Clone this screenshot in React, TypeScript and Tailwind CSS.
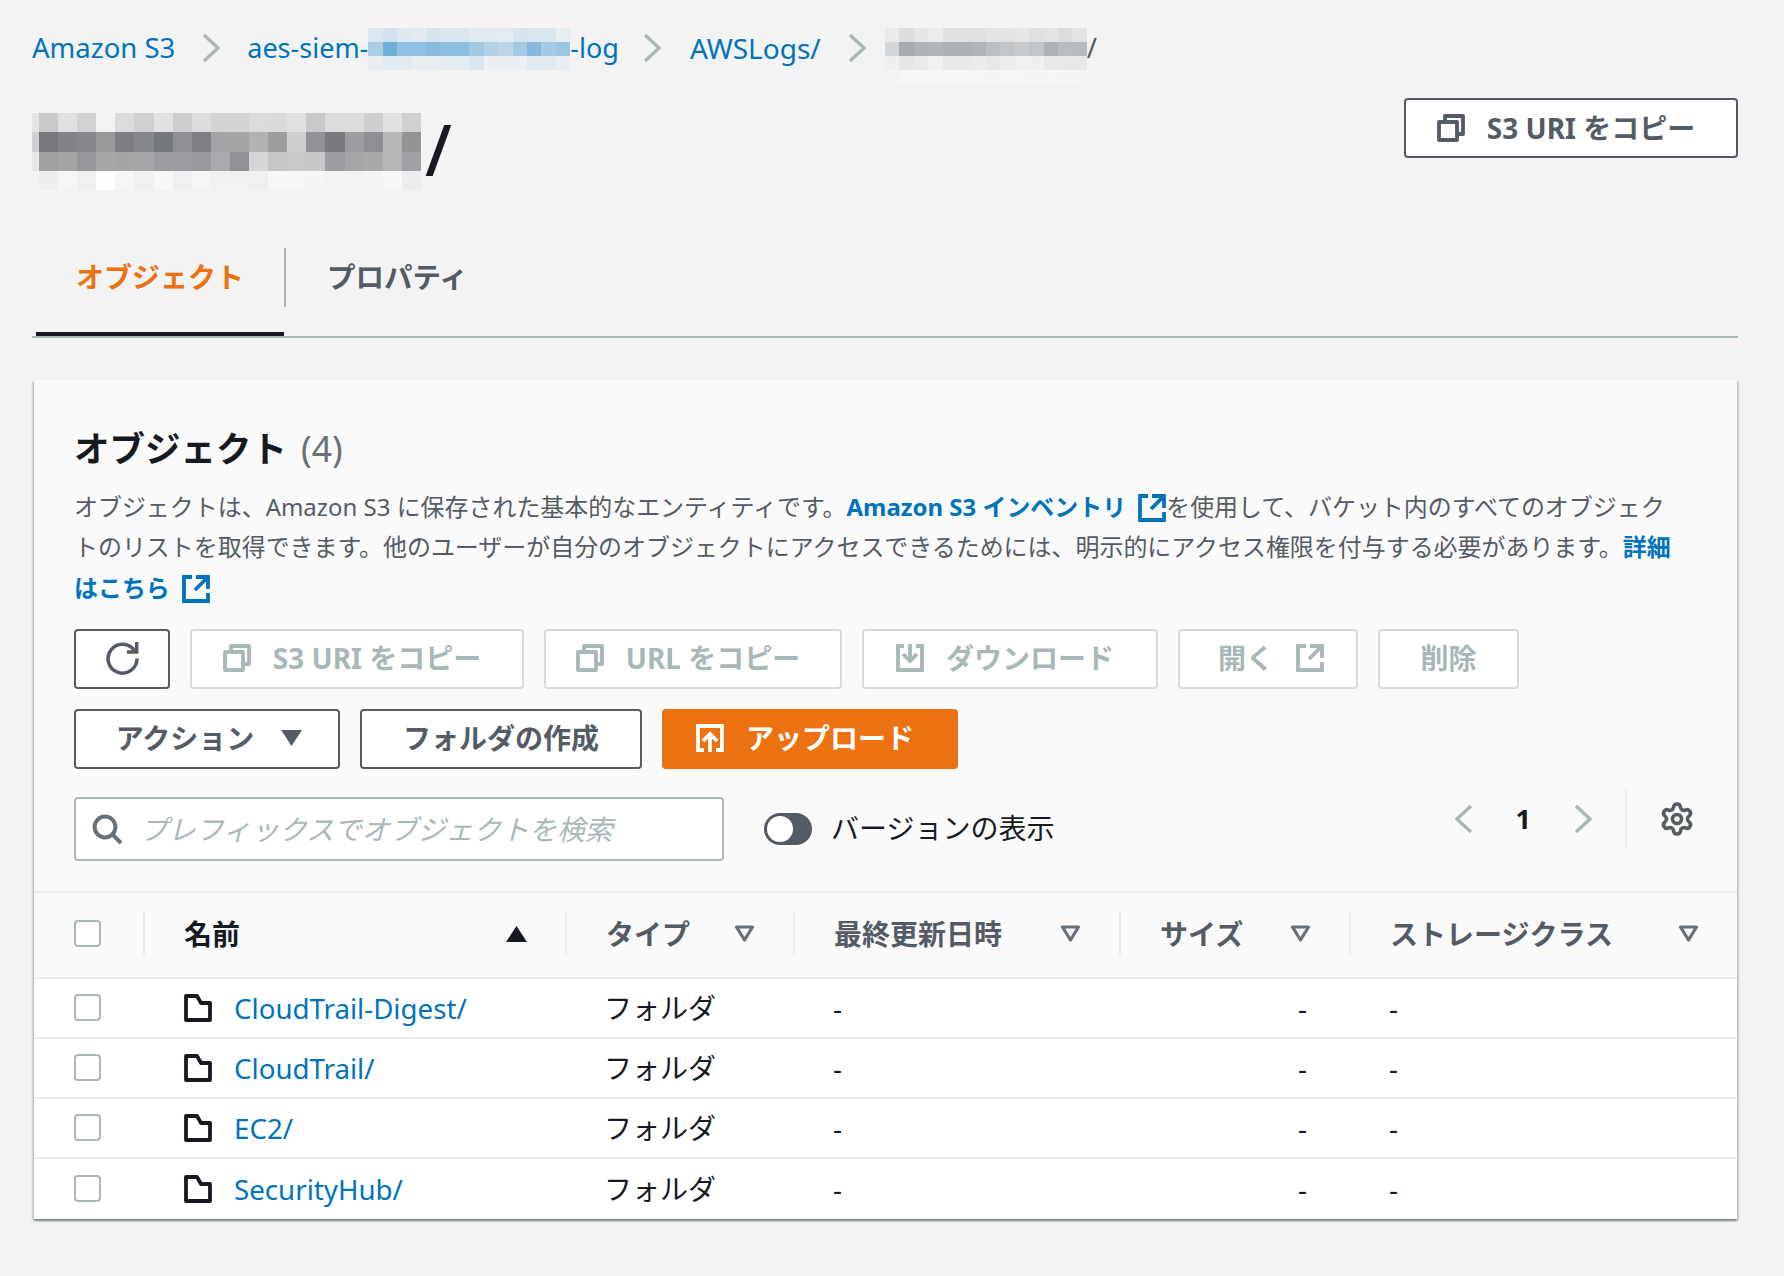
import { Settings } from "lucide-react";
import type { ReactNode } from "react";

const titleCells = [
  "e4e4e5 c8c9cb dee0e2 d0d2d3 f2f2f3 dadbdd cfd0d1 e1e1e2 cdcecf dcdddf d2d3d5 d2d3d5 dadbdd d9dadc dfe0e2 c8c9cb dadbdd dcdcdd cecfd1 e0e1e3 cfd0d2",
  "cfd1d2 77797d 818386 85878a 98999b 7c7e82 85878a 74787c 8d8f92 7d7f83 a3a4a6 a4a5a7 b1b2b4 9c9d9f cecfd1 929396 78797d 9c9d9f 8f9093 b6b7b9 939496",
  "e5e6e7 a0a1a3 a3a4a6 96979a a6a7a9 a4a5a7 a5a6a8 9c9da0 9c9da0 999a9d a9aaac 909194 d5d6d8 c4c5c7 c8c9cb c7c8ca 9c9da0 a5a6a8 a8a9ab b5b6b8 a0a1a4",
  "f3f3f3 eeeeef f6f6f6 eff0f0 fefefe f6f6f6 eef0f2 f8f8f8 eef0f2 f6f6f7 f1f1f2 f1f1f2 f0f0f1 f7f7f7 f7f7f7 f5f5f5 f3f3f4 f3f3f4 f4f4f5 f7f7f7 ededef",
];
const blueCells = [
  "f6f3f2 f6f3f2 f6f3f2 f6f3f2 f6f3f2 f6f3f2 f6f3f2 f6f3f2 f6f3f2 f6f3f2 f6f3f2 f6f3f2 f6f3f2 f6f3f2",
  "dbe6ee d1e2ee dde8f0 e1eaf1 d6e4ee d9e6ef d9e6ef e2eaf0 e2eaf0 e4ebf0 d6e4ee d9e5ee d9e5ee e8edf0",
  "a9cde5 6fb0db 8fc0e1 8fc0e1 86bbdf 8dbfe0 8dbfe0 a3c9e3 b4d2e6 bdd6e7 a3cae4 85b8dc a4cbe4 9bc6e2",
  "e9eef2 e1eaf1 e1eaf1 e8eef2 e6ecf1 e3ebf1 e3ebf1 d9e6ef ecf0f3 ecf0f3 ecf0f3 e0e9f0 e0e9f0 e9eef2",
];
const grayCells = [
  "eaeaeb dcdddf e4e5e6 ebebec dfe0e1 dfe0e1 dfe0e1 e3e3e4 e3e3e4 e6e6e7 e0e0e1 e3e3e4 dcdcdd e3e3e4",
  "d3d6d8 a8abae afb2b5 b2b5b7 aeb1b3 aeb1b3 b1b4b6 bcbfc1 c3c6c8 c9cbcd c3c6c8 afb2b5 babdbf b9bcbe",
  "eeeff0 e5e6e7 e8e9e9 f1f1f2 e7e8e8 e7e8e8 e9eaea e6e7e7 ebecec f0f0f1 efeff0 e8e8e9 e6e7e8 e6e7e8",
  "f4f4f4 f6f6f6 f6f6f6 f7f7f7 f6f6f6 f6f6f6 f6f6f6 f5f5f5 f6f6f6 f6f6f6 f5f5f5 f6f6f6 f5f5f5 f5f5f5",
];

// pixelated blur over the account ids
function Mosaic({ rows, className }: { rows: string[]; className: string }) {
  return (
    <div className={`grid shrink-0 ${className}`}>
      {rows.flatMap((r, i) =>
        r.split(" ").map((c, j) => <div key={`${i}-${j}`} style={{ backgroundColor: `#${c}` }} />)
      )}
    </div>
  );
}

function Icon({ size = 32, color, sw = 1.9, children }: { size?: number; color: string; sw?: number; children: ReactNode }) {
  return (
    <svg width={size} height={size} viewBox="0 0 16 16" fill="none" stroke={color} strokeWidth={sw} className="shrink-0">
      {children}
    </svg>
  );
}

const CopyIcon = ({ color }: { color: string }) => (
  <Icon color={color}>
    <path d="M2 5h9v9H2z" strokeLinejoin="round" />
    <path d="M5 5V2h9v9h-3" strokeLinejoin="round" />
  </Icon>
);
const ExternalIcon = ({ color }: { color: string }) => (
  <Icon color={color}>
    <path d="M14 8V2H8M14 2 7.5 8.5M6 2H2v12h12v-4" />
  </Icon>
);
const FolderIcon = () => (
  <Icon color="#16191f">
    <path d="M2 2v12h12V5.5H9.5L7.5 2z" strokeLinejoin="round" />
  </Icon>
);
const FilterCaret = () => (
  <svg width="21" height="17" viewBox="0 0 21 17" fill="none" stroke="#687078" strokeWidth="3.2" className="shrink-0">
    <path d="M2.5 2h16L10.5 15z" strokeLinejoin="round" />
  </svg>
);

const Chevron = ({ dir, className }: { dir: "l" | "r"; className: string }) => (
  <svg viewBox="0 0 20 30" fill="none" stroke="#aab7b8" strokeWidth="3.4" className={`shrink-0 ${className}`}>
    <path d={dir === "r" ? "M3 2l14 13L3 28" : "M17 2 3 15l14 13"} />
  </svg>
);

function Checkbox() {
  return <div className="-mt-[1px] h-[27px] w-[27px] rounded-[4px] border-2 border-[#aab7b8] bg-white" />;
}

function Btn({ w, disabled, children }: { w: string; disabled?: boolean; children: ReactNode }) {
  return (
    <div
      className={`flex h-[60px] shrink-0 items-center justify-center gap-[20px] rounded-[4px] border-2 bg-white pb-[1px] text-[28px] font-bold ${w} ${
        disabled ? "border-[#d5dbdb] text-[#aab7b8]" : "border-[#545b64] text-[#545b64]"
      }`}
    >
      {children}
    </div>
  );
}

const columnsGrid = "grid grid-cols-[109px_422px_228px_326px_230px_1fr]";

function HeadCell({ label, caret, first }: { label: string; caret: ReactNode; first?: boolean }) {
  return (
    <div className="flex h-[43px] items-center justify-between border-l-2 border-[#eaeded] pl-[39px] pr-[38px] text-[28px] font-bold">
      <span className={`pt-[1px] ${first ? "text-[#16191f]" : "text-[#545b64]"}`}>{label}</span>
      {caret}
    </div>
  );
}

function Row({ name, last }: { name: string; last?: boolean }) {
  return (
    <div className={`${columnsGrid} h-[60px] items-center bg-white text-[28px] text-[#16191f] ${last ? "" : "border-b-2 border-[#eaeded]"}`}>
      <div className="pl-[40px]">
        <Checkbox />
      </div>
      <div className="flex items-center gap-[20px] pl-[39px]">
        <FolderIcon />
        <span className="pt-[2px] text-[27.7px] text-[#0073bb]">{name}</span>
      </div>
      <div className="pl-[39px]">フォルダ</div>
      <div className="pl-[40px]">-</div>
      <div className="pr-[42px] text-right">-</div>
      <div className="pl-[40px]">-</div>
    </div>
  );
}

export default function App() {
  return (
    <div className="min-h-screen w-full bg-[#f3f3f3] pl-[32px] pr-[46px] font-['Noto_Sans','Noto_Sans_CJK_JP',sans-serif]">
      <nav className="flex h-[96px] items-center text-[27.5px] text-[#0073bb]">
        <span>Amazon S3</span>
        <Chevron dir="r" className="mx-[26px] h-[30px] w-[20px]" />
        <span className="text-[27px]">aes-siem-</span>
        <Mosaic rows={blueCells} className="-mt-[7px] h-[51px] w-[202px] grid-cols-14 grid-rows-[9px_14px_14px_14px]" />
        <span className="text-[27px]">-log</span>
        <Chevron dir="r" className="mr-[28px] ml-[23px] h-[30px] w-[20px]" />
        <span className="text-[28px]">AWSLogs/</span>
        <Chevron dir="r" className="mr-[18px] ml-[26px] h-[30px] w-[20px]" />
        <Mosaic rows={grayCells} className="mt-[16px] h-[56px] w-[202px] grid-cols-14 grid-rows-4" />
        <span className="text-[#545b64]">/</span>
      </nav>

      <div className="flex h-[152px] items-start justify-between">
        <div className="mt-[17px] flex items-center">
          <Mosaic rows={titleCells} className="h-[77px] w-[389px] grid-cols-[7px_repeat(20,19.1px)] grid-rows-4" />
          <span className="-mt-[6px] ml-[4px] text-[70px] leading-none font-medium text-[#16191f]">/</span>
        </div>
        <div className="mt-[2px]">
          <Btn w="w-[334px] pr-[12px]">
            <CopyIcon color="#545b64" />
            <span>S3 URI をコピー</span>
          </Btn>
        </div>
      </div>

      <div className="flex h-[90px] items-start border-b-2 border-[#aab7b8] text-[28px] font-bold">
        <div className="ml-[4px] flex h-[88px] w-[248px] justify-center border-b-4 border-[#16191f] pt-[8px] text-[#ec7211]">
          オブジェクト
        </div>
        <div className="flex h-[59px] items-center border-l-2 border-[#aab7b8] pl-[41px] text-[28.5px] text-[#545b64]">プロパティ</div>
      </div>

      <div className="mt-[42px] mr-[1px] ml-[2px] bg-[#fafafa] shadow-[0_2px_2px_0_rgba(0,28,36,0.45),2px_1px_2px_0_rgba(0,28,36,0.12),-2px_1px_2px_0_rgba(0,28,36,0.12)]">
        <div className="flex flex-col pt-[44px] pl-[40px] pr-[42px] pb-[30px]">
          <h2 className="flex items-center gap-[14px] text-[35.5px] leading-[48px] font-bold text-[#16191f]">
            <span>オブジェクト</span>
            <span className="font-normal text-[#687078]">(4)</span>
          </h2>
          <p className="mt-[15px] text-[23.96px] leading-[40.3px] text-[#545b64]">
            オブジェクトは、Amazon S3 に保存された基本的なエンティティです。
            <span className="font-bold text-[#0073bb]">Amazon S3 インベントリ</span>
            <span className="mr-[-2px] ml-[10px] inline-block align-[-8px]">
              <ExternalIcon color="#0073bb" />
            </span>
            を使用して、バケット内のすべてのオブジェク
            <br />
            トのリストを取得できます。他のユーザーが自分のオブジェクトにアクセスできるためには、明示的にアクセス権限を付与する必要があります。
            <span className="font-bold text-[#0073bb]">詳細</span>
            <br />
            <span className="font-bold text-[#0073bb]">はこちら</span>
            <span className="ml-[10px] inline-block align-[-8px]">
              <ExternalIcon color="#0073bb" />
            </span>
          </p>

          <div className="mt-[21px] flex gap-[20px]">
            <Btn w="w-[96px]">
              <Icon size={35} color="#545b64" sw={1.6}>
                <path d="M10 5h4.5V.5" />
                <path d="M14.6 8a6.6 6.6 0 1 1-1-3.4" />
              </Icon>
            </Btn>
            <Btn w="w-[334px] pr-[12px]" disabled>
              <CopyIcon color="#aab7b8" />
              <span>S3 URI をコピー</span>
            </Btn>
            <Btn w="w-[298px] pr-[12px]" disabled>
              <CopyIcon color="#aab7b8" />
              <span>URL をコピー</span>
            </Btn>
            <Btn w="w-[296px] pr-[12px]" disabled>
              <Icon color="#aab7b8">
                <path d="M5 2H2v12h12V2h-3" />
                <path d="M8 1v8M4.5 6 8 9.5 11.5 6" />
              </Icon>
              <span>ダウンロード</span>
            </Btn>
            <Btn w="w-[180px] pl-[8px]" disabled>
              <span>開く</span>
              <ExternalIcon color="#aab7b8" />
            </Btn>
            <Btn w="w-[141px]" disabled>
              <span>削除</span>
            </Btn>
          </div>

          <div className="mt-[20px] flex gap-[20px]">
            <Btn w="w-[266px] pl-[4px]">
              <span>アクション</span>
              <svg width="21" height="16" viewBox="0 0 21 16" fill="#545b64" className="ml-[7px] shrink-0">
                <path d="M0 0h21L10.5 16z" />
              </svg>
            </Btn>
            <Btn w="w-[282px]">
              <span>フォルダの作成</span>
            </Btn>
            <div className="flex h-[60px] w-[296px] items-center justify-center gap-[20px] rounded-[4px] bg-[#ec7211] pr-[12px] pb-[1px] text-[28px] font-bold text-white">
              <Icon color="#ffffff">
                <path d="M5 14H2V2h12v12h-3" />
                <path d="M8 15V6.5M4.5 9.5 8 6l3.5 3.5" />
              </Icon>
              <span>アップロード</span>
            </div>
          </div>

          <div className="mt-[20px] flex items-start">
            <div className="mt-[8px] flex h-[64px] w-[650px] items-center gap-[17px] rounded-[4px] border-2 border-[#aab7b8] bg-white pl-[15px]">
              <Icon color="#687078" sw={2}>
                <circle cx="7" cy="7" r="5.2" />
                <path d="M10.7 10.7 15 15" />
              </Icon>
              <span className="pt-[2px] text-[27.9px] text-[#aab7b8] italic">プレフィックスでオブジェクトを検索</span>
            </div>
            <div className="mt-[20px] ml-[40px] flex items-center gap-[19px]">
              <div className="flex h-[32px] w-[48px] items-center rounded-full bg-[#545b64] pl-[3px]">
                <div className="h-[26px] w-[26px] rounded-full bg-white" />
              </div>
              <span className="-mt-[2px] text-[28px] text-[#16191f]">バージョンの表示</span>
            </div>
            <div className="ml-auto flex h-[60px] items-center">
              <Chevron dir="l" className="h-[30px] w-[20px]" />
              <span className="mx-[42px] text-[27px] font-bold text-[#16191f]">1</span>
              <Chevron dir="r" className="h-[30px] w-[20px]" />
              <div className="mr-[32px] ml-[32px] h-[60px] w-[2px] bg-[#eaeded]" />
              <Settings size={36} color="#545b64" strokeWidth={2.4} />
            </div>
          </div>
        </div>

        <div className={`${columnsGrid} h-[88px] items-center border-y-2 border-[#eaeded] pb-[2px]`}>
          <div className="pl-[40px]">
            <Checkbox />
          </div>
          <HeadCell
            label="名前"
            first
            caret={
              <svg width="21" height="16" viewBox="0 0 21 16" fill="#16191f" className="shrink-0">
                <path d="M10.5 0 21 16H0z" />
              </svg>
            }
          />
          <HeadCell label="タイプ" caret={<FilterCaret />} />
          <HeadCell label="最終更新日時" caret={<FilterCaret />} />
          <HeadCell label="サイズ" caret={<FilterCaret />} />
          <HeadCell label="ストレージクラス" caret={<FilterCaret />} />
        </div>

        <Row name="CloudTrail-Digest/" />
        <Row name="CloudTrail/" />
        <Row name="EC2/" />
        <Row name="SecurityHub/" last />
      </div>
    </div>
  );
}
